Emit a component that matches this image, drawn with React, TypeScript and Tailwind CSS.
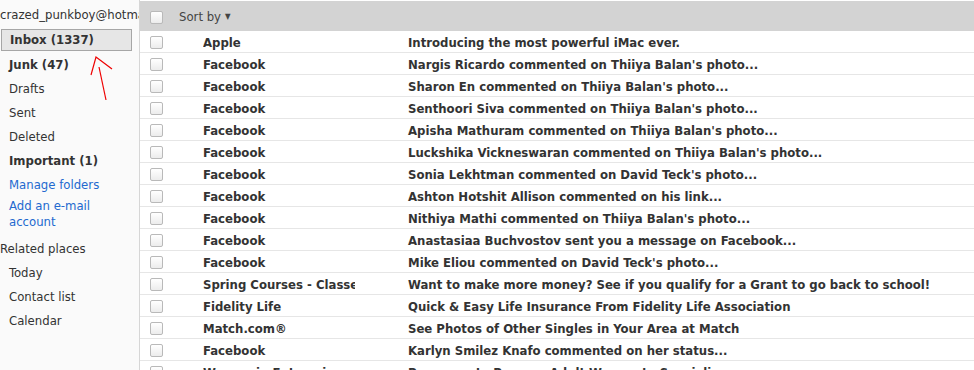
import React from "react"

const rows: { from: string; subject: string }[] = [
    { from: "Apple", subject: "Introducing the most powerful iMac ever." },
    { from: "Facebook", subject: "Nargis Ricardo commented on Thiiya Balan's photo..." },
    { from: "Facebook", subject: "Sharon En commented on Thiiya Balan's photo..." },
    { from: "Facebook", subject: "Senthoori Siva commented on Thiiya Balan's photo..." },
    { from: "Facebook", subject: "Apisha Mathuram commented on Thiiya Balan's photo..." },
    { from: "Facebook", subject: "Luckshika Vickneswaran commented on Thiiya Balan's photo..." },
    { from: "Facebook", subject: "Sonia Lekhtman commented on David Teck's photo..." },
    { from: "Facebook", subject: "Ashton Hotshit Allison commented on his link..." },
    { from: "Facebook", subject: "Nithiya Mathi commented on Thiiya Balan's photo..." },
    { from: "Facebook", subject: "Anastasiaa Buchvostov sent you a message on Facebook..." },
    { from: "Facebook", subject: "Mike Eliou commented on David Teck's photo..." },
    { from: "Spring Courses - Classes", subject: "Want to make more money? See if you qualify for a Grant to go back to school!" },
    { from: "Fidelity Life", subject: "Quick & Easy Life Insurance From Fidelity Life Association" },
    { from: "Match.com®", subject: "See Photos of Other Singles in Your Area at Match" },
    { from: "Facebook", subject: "Karlyn Smilez Knafo commented on her status..." },
    { from: "Women in Enterprise", subject: "Programs to Prepare Adult Women to Specialize" },
]

function Check() {
    return <div className="w-[13px] h-[13px] rounded-[2px] border border-[#b9b9b9] bg-gradient-to-b from-white to-[#ececec] shrink-0" />
}

export default function App() {
    const font = { fontFamily: "'DejaVu Sans Condensed', 'DejaVu Sans', sans-serif" }
    return (
        <div className="relative w-[974px] h-[370px] overflow-hidden bg-white flex text-[13px]" style={font}>
            {/* folder pane */}
            <div className="w-[140px] shrink-0 bg-[#fafafa] border-r border-[#d6d6d6] text-[#333] overflow-hidden">
                <div className="h-[29px] leading-[30px] whitespace-nowrap text-[#333]">crazed_punkboy@hotmail.com</div>
                <div className="ml-px w-[131px] h-[22px] leading-[20px] pl-2 bg-[#e6e6e6] border border-[#a6a6a6] font-bold">Inbox (1337)</div>
                <div className="pl-[9px] leading-6 mt-[2px]">
                    <div className="font-bold">Junk (47)</div>
                    <div>Drafts</div>
                    <div>Sent</div>
                    <div>Deleted</div>
                    <div className="font-bold">Important (1)</div>
                    <div className="text-[#2369cf]">Manage folders</div>
                    <div className="text-[#2369cf] leading-4 pt-px pb-[6px]">Add an e-mail<br />account</div>
                </div>
                <div className="leading-6 mt-px">Related places</div>
                <div className="pl-[9px] leading-6">
                    <div>Today</div>
                    <div>Contact list</div>
                    <div>Calendar</div>
                </div>
            </div>

            {/* message list */}
            <div className="flex-1 flex flex-col">
                <div className="h-[30px] shrink-0 mt-px pt-[2px] bg-[#d3d3d3] flex items-center pl-[10px] gap-[16px] text-[#444]">
                    <Check />
                    <span className="flex items-center gap-1">Sort by <span className="text-[8px]">▼</span></span>
                </div>
                {rows.map((r, i) => (
                    <div key={i} className="h-[22px] shrink-0 pt-[2px] flex items-center border-b border-[#e6e6e6] pl-[10px] font-bold text-[#333]">
                        <Check />
                        <div className="ml-[40px] w-[152px] overflow-hidden whitespace-nowrap">{r.from}</div>
                        <div className="ml-[53px] whitespace-nowrap">{r.subject}</div>
                    </div>
                ))}
            </div>

            {/* hand-drawn arrow */}
            <svg className="absolute left-0 top-0 pointer-events-none" width="140" height="110">
                <path d="M112 69 L96 57 L91 75" stroke="#e00" strokeWidth="1.2" fill="none" />
                <path d="M99 67 L106 100" stroke="#e00" strokeWidth="1.2" fill="none" />
            </svg>
        </div>
    )
}
